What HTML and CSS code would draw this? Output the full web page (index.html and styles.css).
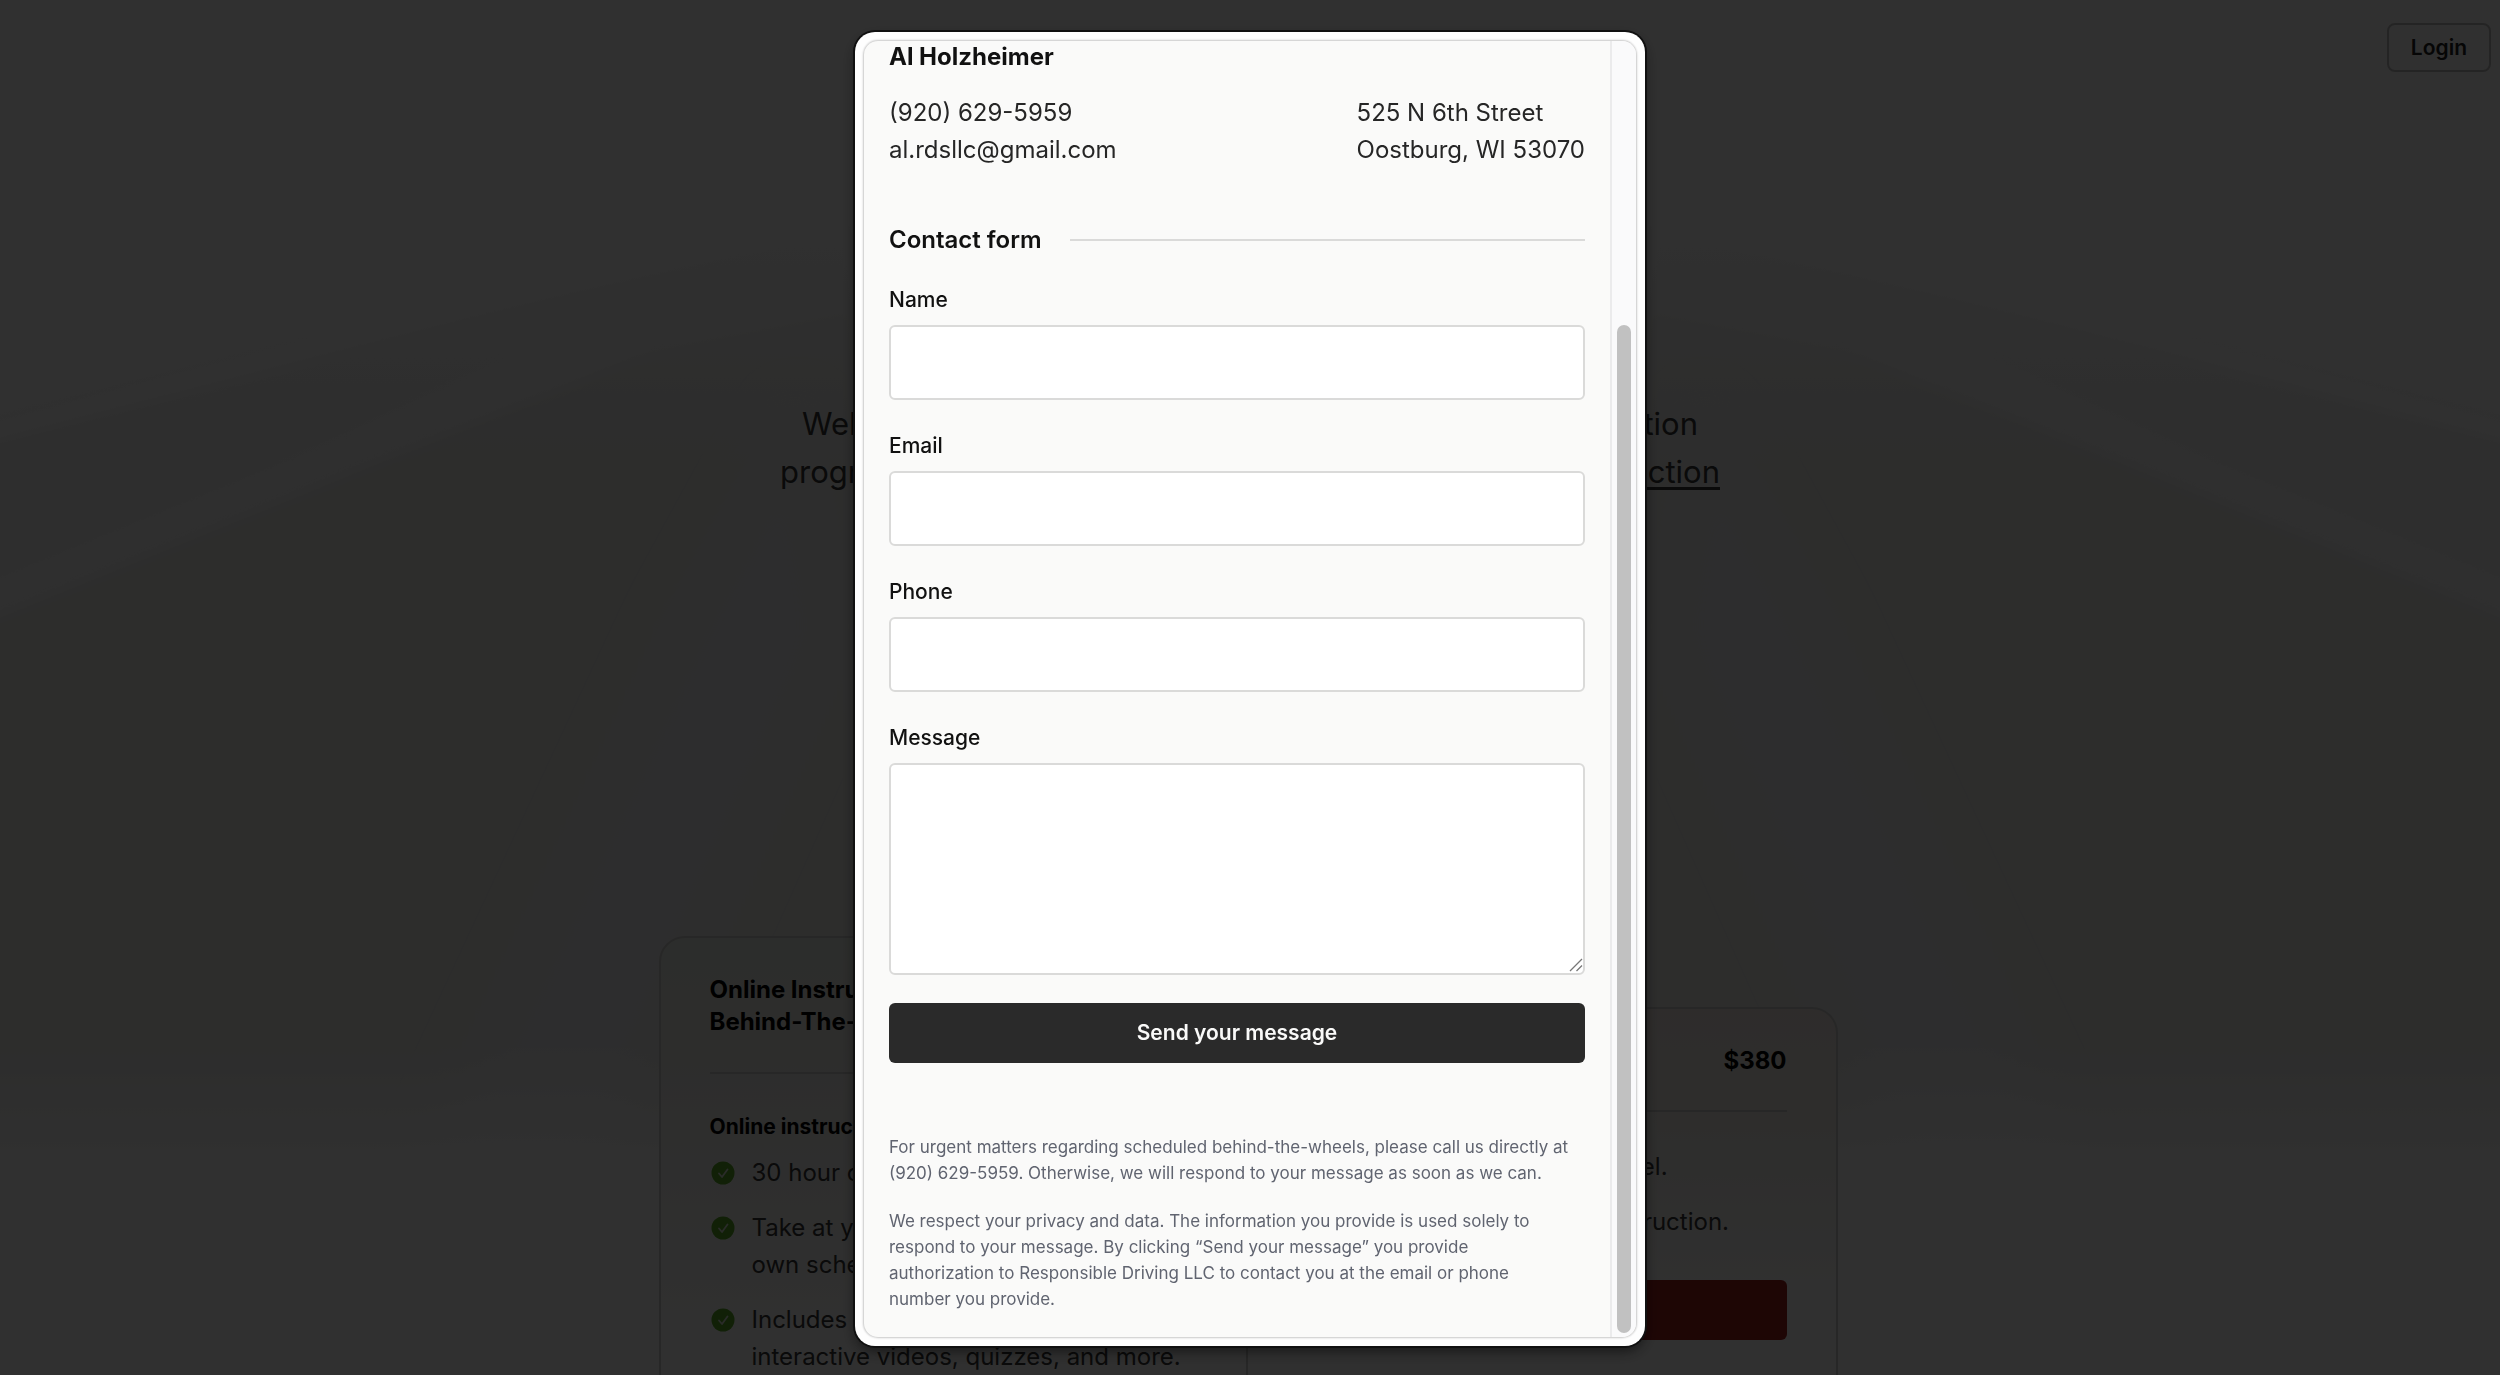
FILE: index.html
```html
<!DOCTYPE html>
<html lang="en">
<head>
<meta charset="utf-8">
<title>Responsible Driving LLC</title>
<link rel="stylesheet" href="styles.css">
</head>
<body>
<svg class="symbols" aria-hidden="true">
  <symbol id="check" viewBox="0 0 24 24">
    <circle cx="12" cy="12" r="11.500" fill="#54a024"/>
    <path d="M8 12.500l3 3.500 5.500-7.500" fill="none" stroke="#d0d8cc" stroke-width="1.800" stroke-linecap="round" stroke-linejoin="round"/>
  </symbol>
</svg>
<div class="page">
  <svg class="backdrop" viewBox="0 0 2500 1375" preserveAspectRatio="none" aria-hidden="true">
    <defs>
      <linearGradient id="fade" x1="0" y1="0" x2="0" y2="1">
        <stop offset="0.140" stop-color="#f0f0f0"/>
        <stop offset="0.220" stop-color="#f0f0f0" stop-opacity="0.500"/>
        <stop offset="0.340" stop-color="#f0f0f0" stop-opacity="0"/>
        <stop offset="0.760" stop-color="#f0f0f0" stop-opacity="0"/>
        <stop offset="0.850" stop-color="#f0f0f0"/>
      </linearGradient>
      <filter id="soft"><feGaussianBlur stdDeviation="24"/></filter>
      <filter id="edge"><feGaussianBlur stdDeviation="5"/></filter>
    </defs>
    <path fill="#e4e4e4" filter="url(#edge)" d="M-40 450L474 316 815 230H1685L2026 316 2540 450V1400H-40z"/>
    <path fill="none" stroke="#e4e4e4" stroke-width="5" filter="url(#edge)" d="M-40 428L474 294 815 212M1685 212L2026 294 2540 428"/>
    <path fill="none" stroke="#e8e8e8" stroke-width="40" filter="url(#edge)" d="M-40 610L300 472 640 330M1860 330L2200 472 2540 610"/>
    <path fill="#dededc" filter="url(#edge)" d="M-40 636L300 498 640 358 860 310H1640L1860 358 2200 498 2540 636V1400H-40z"/>
    <path fill="#e2e2e3" filter="url(#soft)" d="M800 400L680 620 420 1180H600L840 640zM1700 400L1820 620 2080 1180H1900L1660 640z"/>
    <rect width="2500" height="1375" fill="url(#fade)"/>
  </svg>
  <header class="top"><a class="login" href="#login">Login</a></header>
  <p class="hero">
    <span class="hero-line first">Welcome to Responsible Driving's online driver education</span>
    <span class="hero-line second">program. We also offer the best behind-the-wheel <a href="#instruction">instruction</a></span>
  </p>
  <div class="plans">
    <section class="plan green">
      <header class="plan-head"><h2>Online Instruction and<br>Behind-The-Wheel</h2></header>
      <h3>Online instruction</h3>
      <ul>
        <li><svg><use href="#check"/></svg><span>30 hour course.</span></li>
        <li><svg><use href="#check"/></svg><span>Take at your pace, on your<br>own schedule.</span></li>
        <li><svg><use href="#check"/></svg><span>Includes engaging<br>interactive videos, quizzes, and more.</span></li>
      </ul>
    </section>
    <section class="plan red">
      <header class="plan-head"><h2>Behind-The-Wheel</h2><strong>$380</strong></header>
      <ul>
        <li><svg><use href="#check"/></svg><span>6 sessions behind the wheel.</span></li>
        <li><svg><use href="#check"/></svg><span>6 hours of on-road car instruction.</span></li>
      </ul>
      <button type="button" class="buy">Enroll</button>
    </section>
  </div>
</div>

<div class="overlay">
  <div class="dialog" role="dialog" aria-modal="true" aria-labelledby="form-title">
    <div class="panel">
      <div class="content">
        <h2 class="person">Al Holzheimer</h2>
        <div class="contact">
          <div>(920) 629-5959<br>al.rdsllc@gmail.com</div>
          <address>525 N 6th Street<br>Oostburg, WI 53070</address>
        </div>
        <h2 class="form-title" id="form-title">Contact form</h2>
        <form>
          <div class="field"><label for="name">Name</label><input id="name" type="text"></div>
          <div class="field"><label for="email">Email</label><input id="email" type="email"></div>
          <div class="field"><label for="phone">Phone</label><input id="phone" type="tel"></div>
          <div class="field"><label for="message">Message</label>
            <div class="area"><textarea id="message"></textarea>
              <svg class="grip" viewBox="0 0 14 14" aria-hidden="true"><path d="M1 13L13 1M7.500 13L13 7.500" stroke="#777" stroke-width="1.300" fill="none"/></svg>
            </div>
          </div>
          <button type="submit" class="send">Send your message</button>
        </form>
        <div class="notes">
          <p>For urgent matters regarding scheduled behind-the-wheels, please call us directly at (920) 629-5959. Otherwise, we will respond to your message as soon as we can.</p>
          <p>We respect your privacy and data. The information you provide is used solely to respond to your message. By clicking “Send your message” you provide<br>authorization to Responsible Driving LLC to contact you at the email or phone<br>number you provide.</p>
        </div>
      </div>
      <div class="track" aria-hidden="true"><div class="thumb"></div></div>
    </div>
  </div>
</div>
</body>
</html>
```
FILE: styles.css
```css
* { box-sizing: border-box; }
body, h2, h3, p, ul { margin: 0; padding: 0; }
body {
  height: 100vh;
  overflow: hidden;
  background: #f0f0f0;
  color: #111;
  font: 24px/37px Inter, "Liberation Sans", sans-serif;
}
.symbols { position: absolute; width: 0; height: 0; }

.page { position: relative; height: 100vh; overflow: hidden; }
.backdrop { position: absolute; inset: 0; width: 100%; height: 100%; }
.top { position: relative; display: flex; justify-content: flex-end; padding: 23px 9px 0; }
.login {
  padding: 0 22px;
  border: 2px solid #b4b4b4;
  border-radius: 8px;
  color: #222;
  font-size: 21px;
  font-weight: 600;
  line-height: 45px;
  text-decoration: none;
}
.hero {
  position: relative;
  display: flex;
  flex-direction: column;
  align-items: center;
  margin-top: 328px;
  color: #333;
  font-size: 31px;
  line-height: 48px;
}
.hero-line { white-space: nowrap; text-align-last: justify; }
.first { width: 896px; }
.second { width: 940px; }
.hero a { color: inherit; text-underline-offset: 4px; }
.plans {
  position: relative;
  display: grid;
  grid-template-columns: 589px 590px;
  justify-content: center;
  align-items: start;
  margin-top: 440px;
  padding-right: 4px;
}
.plan { height: 600px; padding: 36px 49px; border: 2px solid #c2c2c0; border-radius: 26px; }
.green { background: linear-gradient(#dce1da, #dfdeda 80px, #f0f0f0 420px); }
.red {
  height: 529px;
  margin-top: 71px;
  border-left: 0;
  border-top-left-radius: 0;
  background: linear-gradient(#e6dcd8, #e4e2dd 120px, #f0f0f0 300px);
}
.plan-head { display: flex; justify-content: space-between; border-bottom: 2px solid #c2c2c0; line-height: 32px; color: #000; }
.plan-head h2 { font-size: 24px; font-weight: 700; }
.green .plan-head { padding-bottom: 34px; margin-bottom: 37px; }
.red .plan-head { padding-bottom: 33px; margin-bottom: 36px; }
.plan h3 { color: #000; font-size: 21px; font-weight: 700; line-height: 32px; margin-bottom: 11px; }
.plan ul { display: grid; gap: 18px; list-style: none; color: #333; }
.plan li { display: flex; gap: 17px; padding-left: 1px; white-space: nowrap; }
.plan li svg { width: 24px; height: 24px; margin-top: 7px; }
.buy { width: 100%; height: 60px; margin-top: 40px; border: 0; border-radius: 6px; background: #951f1b; color: #951f1b; font: 600 21px Inter, sans-serif; }

.overlay {
  position: fixed;
  inset: 0;
  display: flex;
  justify-content: center;
  padding: 32px 16px 29px;
  background: rgba(0, 0, 0, 0.8);
}
.dialog {
  width: 100%;
  max-width: 790px;
  padding: 9px;
  border-radius: 20px;
  background: #fefefe;
  box-shadow: 0 0 0 2px #101010, 0 6px 14px rgba(0, 0, 0, 0.5);
}
.panel {
  display: flex;
  height: 100%;
  overflow: hidden;
  border-radius: 14px;
  background: #fafaf9;
  box-shadow: 0 0 2px 1px #c8c8c8;
}
.content { flex: 1; min-width: 0; padding: 0 25px; }
.person, .form-title { color: #111; font-size: 24px; font-weight: 600; line-height: 32px; }
.person { font-weight: 700; }
.contact { display: flex; justify-content: space-between; margin: 21px 0 56px; color: #262626; }
address { font-style: normal; }
.form-title { display: flex; align-items: center; gap: 28px; margin-bottom: 31px; }
.form-title::after { content: ""; flex: 1; height: 2px; background: #dadad9; }
form { display: flex; flex-direction: column; }
.field { display: flex; flex-direction: column; gap: 12px; margin-bottom: 33px; }
.field:last-of-type { margin-bottom: 28px; }
label { color: #111; font-size: 21px; font-weight: 500; line-height: 26px; }
input, textarea {
  display: block;
  width: 100%;
  height: 75px;
  padding: 16px;
  border: 2px solid #dadad9;
  border-radius: 6px;
  background: #fff;
  font: inherit;
}
.area { position: relative; }
textarea { height: 212px; resize: none; }
.grip { position: absolute; right: 2px; bottom: 3px; width: 14px; height: 14px; }
.send {
  height: 60px;
  border: 0;
  border-radius: 6px;
  background: #2a2a2a;
  color: #fafaf9;
  font: 600 21px/32px Inter, "Liberation Sans", sans-serif;
}
.notes { display: grid; gap: 22px; margin-top: 71px; color: #606470; font-size: 17px; line-height: 26px; }
.track { display: flex; width: 26px; padding: 284px 5px 4px 5px; border-left: 2px solid #ebebec; background: #fafafb; }
.thumb { flex: 1; border-radius: 8px; background: #c1c1c1; }
```
